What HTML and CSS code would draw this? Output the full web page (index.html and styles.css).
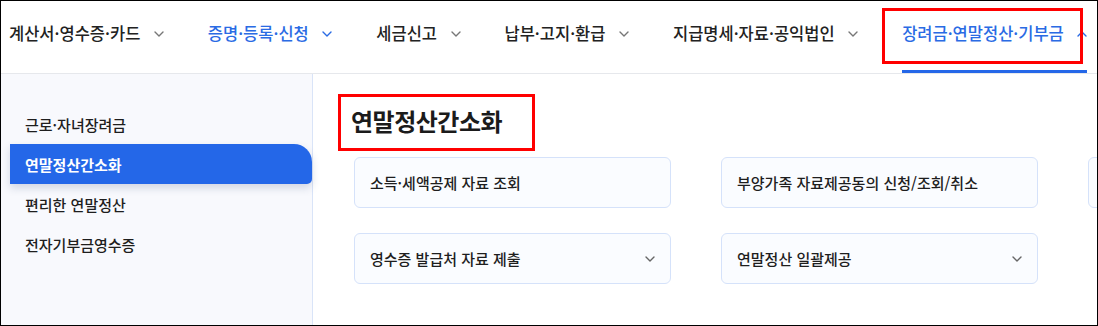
FILE: index.html
```html
<!DOCTYPE html>
<html lang="ko">
<head>
<meta charset="utf-8">
<title>연말정산간소화</title>
<link rel="stylesheet" href="styles.css">
</head>
<body>
<div class="frame">
  <header class="gnb">
    <nav class="gnb-list">
      <div class="gnb-item"><span>계산서·영수증·카드</span><svg class="chev" viewBox="0 0 10 6"><path d="M1 1l4 4 4-4"/></svg></div>
      <div class="gnb-item is-blue"><span>증명·등록·신청</span><svg class="chev" viewBox="0 0 10 6"><path d="M1 1l4 4 4-4"/></svg></div>
      <div class="gnb-item"><span>세금신고</span><svg class="chev" viewBox="0 0 10 6"><path d="M1 1l4 4 4-4"/></svg></div>
      <div class="gnb-item"><span>납부·고지·환급</span><svg class="chev" viewBox="0 0 10 6"><path d="M1 1l4 4 4-4"/></svg></div>
      <div class="gnb-item"><span>지급명세·자료·공익법인</span><svg class="chev" viewBox="0 0 10 6"><path d="M1 1l4 4 4-4"/></svg></div>
      <div class="gnb-item is-blue is-active"><span>장려금·연말정산·기부금</span><svg class="chev" viewBox="0 0 10 6"><path d="M1 5l4-4 4 4"/></svg></div>
    </nav>
  </header>
  <div class="body">
    <aside class="side">
      <ul class="side-list">
        <li class="side-item">근로·자녀장려금</li>
        <li class="side-item is-on">연말정산간소화</li>
        <li class="side-item">편리한 연말정산</li>
        <li class="side-item">전자기부금영수증</li>
      </ul>
    </aside>
    <main class="content">
      <h1 class="title">연말정산간소화</h1>
      <div class="cards">
        <div class="card"><span>소득·세액공제 자료 조회</span></div>
        <div class="card"><span>부양가족 자료제공동의 신청/조회/취소</span></div>
        <div class="card"></div>
        <div class="card"><span>영수증 발급처 자료 제출</span><svg class="chev card-chev" viewBox="0 0 10 6"><path d="M1 1l4 4 4-4"/></svg></div>
        <div class="card"><span>연말정산 일괄제공</span><svg class="chev card-chev" viewBox="0 0 10 6"><path d="M1 1l4 4 4-4"/></svg></div>
      </div>
    </main>
  </div>
  <div class="mark mark-nav"></div>
  <div class="mark mark-title"></div>
</div>
</body>
</html>
```

FILE: styles.css
```css
* { box-sizing: border-box; }
html, body { margin: 0; padding: 0; }
body {
  width: 1098px;
  height: 326px;
  overflow: hidden;
  background: #fff;
  font-family: "Noto Sans CJK KR", "Noto Sans", sans-serif;
  color: #1e1e1e;
}
.frame {
  position: relative;
  width: 1098px;
  height: 326px;
  border: 1px solid #000;
  overflow: hidden;
  display: flex;
  flex-direction: column;
}
.gnb {
  height: 73px;
  flex: none;
  border-bottom: 1px solid #e6e8ec;
}
.gnb-list {
  display: flex;
  height: 72px;
  padding-left: 8px;
  gap: 44px;
  white-space: nowrap;
}
.gnb-item {
  position: relative;
  display: flex;
  align-items: flex-start;
  padding-top: 20px;
  font-size: 16.5px;
  font-weight: 500;
  line-height: 24px;
  color: #222;
}
.gnb-item .chev {
  width: 10px;
  height: 6px;
  margin-left: 13.5px;
  margin-top: 10px;
  flex: none;
  stroke: #777;
}
.gnb-item.is-blue { color: #2a6be4; }
.gnb-item.is-blue .chev { stroke: #2a6be4; }
.gnb-item.is-active::after {
  content: "";
  position: absolute;
  left: 0;
  right: 0;
  bottom: 0;
  height: 3px;
  background: #2467e8;
}
.chev {
  fill: none;
  stroke-width: 1.4;
  stroke-linecap: round;
  stroke-linejoin: round;
}
.body {
  flex: 1;
  display: flex;
  min-height: 0;
}
.side {
  width: 312px;
  flex: none;
  background: #f8f9fd;
  border-right: 1px solid #d9e4f8;
  padding-top: 30px;
}
.side-list {
  list-style: none;
  margin: 0;
  padding: 0 0 0 9px;
}
.side-item {
  height: 40px;
  display: flex;
  align-items: center;
  padding-left: 15px;
  font-size: 15px;
  font-weight: 500;
  color: #1e1e1e;
}
.side-item.is-on {
  background: #2467e8;
  color: #fff;
  font-weight: 700;
  border-radius: 0 18px 5px 0;
  box-shadow: 0 4px 8px rgba(40, 60, 110, 0.18);
}
.content {
  flex: 1;
  padding: 30px 0 0 38px;
  min-width: 0;
}
.title {
  margin: 0;
  height: 33px;
  font-size: 24px;
  font-weight: 700;
  letter-spacing: -0.5px;
  line-height: 33px;
  color: #1b1b1b;
}
.cards {
  margin: 20px 0 0 3px;
  display: grid;
  grid-template-columns: 317px 317px 317px;
  grid-auto-rows: 51px;
  column-gap: 50px;
  row-gap: 25px;
}
.card {
  display: flex;
  align-items: center;
  justify-content: space-between;
  padding: 0 15px 0 15px;
  background: #fafcff;
  border: 1px solid #d5e2fa;
  border-radius: 6px;
  font-size: 15px;
  font-weight: 500;
  color: #1e1e1e;
  white-space: nowrap;
}
.card-chev {
  width: 10px;
  height: 6px;
  flex: none;
  stroke: #666;
}
.mark {
  position: absolute;
  border: 3px solid #f00;
}
.mark-nav { left: 881px; top: 7px; width: 201px; height: 56px; }
.mark-title { left: 337px; top: 93px; width: 197px; height: 57px; }
```
